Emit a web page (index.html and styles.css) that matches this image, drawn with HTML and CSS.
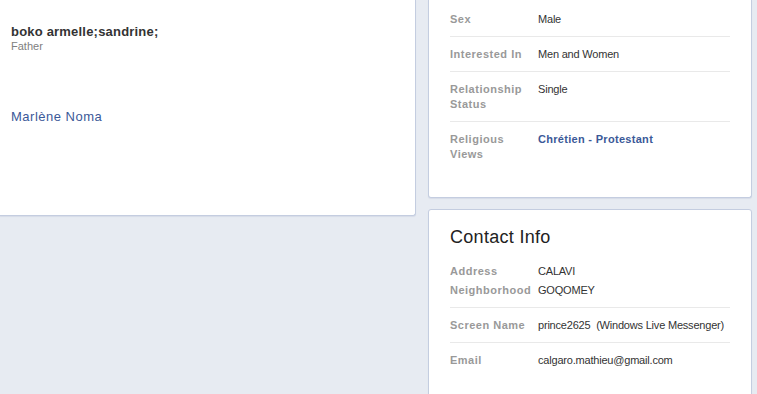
FILE: index.html
```html
<!DOCTYPE html>
<html>
	<head>
		<meta charset="utf-8">
		<title>About</title>
		<link rel="stylesheet" href="styles.css">
	</head>
	<body>
		<div class="page">
			<div class="left-col">
				<div class="family-box">
					<div class="member">
						<div class="member-name">boko armelle;sandrine;</div>
						<div class="member-rel">Father</div>
					</div>
					<a class="member-link" href="#">Marlène Noma</a>
				</div>
			</div>

			<div class="right-col">
				<div class="box basic-box">
					<ul class="info">
						<li>
							<span class="label">Sex</span>
							<span class="value">Male</span>
						</li>
						<li>
							<span class="label">Interested In</span>
							<span class="value">Men and Women</span>
						</li>
						<li>
							<span class="label">Relationship Status</span>
							<span class="value">Single</span>
						</li>
						<li>
							<span class="label">Religious Views</span>
							<a class="value link" href="#">Chrétien - Protestant</a>
						</li>
					</ul>
				</div>

				<div class="box contact-box">
					<h3>Contact Info</h3>
					<ul class="info">
						<li class="multi">
							<div class="pair">
								<span class="label">Address</span>
								<span class="value">CALAVI</span>
							</div>
							<div class="pair">
								<span class="label">Neighborhood</span>
								<span class="value">GOQOMEY</span>
							</div>
						</li>
						<li>
							<span class="label">Screen Name</span>
							<span class="value">prince2625&nbsp; (Windows Live Messenger)</span>
						</li>
						<li>
							<span class="label">Email</span>
							<span class="value">calgaro.mathieu@gmail.com</span>
						</li>
					</ul>
				</div>
			</div>
		</div>
	</body>
</html>
```

FILE: styles.css
```css
* {
	margin: 0;
	padding: 0;
	box-sizing: border-box;
}

body {
	background-color: #e7ebf2;
	font-family: "Liberation Sans", Arial, sans-serif;
	font-size: 11px;
	color: #333;
	overflow: hidden;
}

a {
	text-decoration: none;
	color: #3b5998;
}

li {
	list-style: none;
}

.page {
	display: flex;
	gap: 12px;
	align-items: flex-start;
}

.left-col {
	width: 416px;
}

.family-box {
	height: 216px;
	background-color: #fff;
	border-right: 1px solid #c4cde0;
	border-bottom: 1px solid #c4cde0;
	border-bottom-right-radius: 3px;
	box-shadow: 0 1px 1px #d6dce8;
	padding: 24px 11px 0;
}

.member-name {
	font-size: 13px;
	font-weight: bold;
	color: #333;
	line-height: 16px;
	letter-spacing: 0.2px;
}

.member-rel {
	color: #808080;
	line-height: 13px;
}

.member-link {
	display: block;
	margin-top: 56px;
	font-size: 13px;
	line-height: 16px;
	letter-spacing: 0.5px;
}

.right-col {
	width: 324px;
	display: flex;
	flex-direction: column;
	gap: 11px;
}

.box {
	background-color: #fff;
	border: 1px solid #c4cde0;
	border-radius: 3px;
	box-shadow: 0 1px 1px #d6dce8;
	padding: 0 21px;
}

.basic-box {
	border-top: none;
	border-top-left-radius: 0;
	border-top-right-radius: 0;
	padding-top: 2px;
	padding-bottom: 26px;
}

.contact-box {
	padding-top: 16px;
	height: 200px;
}

.contact-box h3 {
	font-size: 18px;
	font-weight: normal;
	line-height: 22px;
	letter-spacing: 0.3px;
	color: #222;
	margin-bottom: 6px;
}

.info li {
	display: flex;
	padding: 10px 0 9px;
	line-height: 15px;
	border-bottom: 1px solid #e9e9e9;
}

.info li:last-child {
	border-bottom: none;
}

.info li.multi {
	display: flex;
	flex-direction: column;
	gap: 4px;
}

.pair {
	display: flex;
}

.label {
	width: 88px;
	padding-right: 6px;
	flex-shrink: 0;
	color: #999;
	font-weight: bold;
	letter-spacing: 0.5px;
}

.value {
	color: #333;
	white-space: nowrap;
	letter-spacing: -0.2px;
}

.link {
	color: #3b5998;
	font-weight: bold;
	letter-spacing: 0.3px;
}
```
